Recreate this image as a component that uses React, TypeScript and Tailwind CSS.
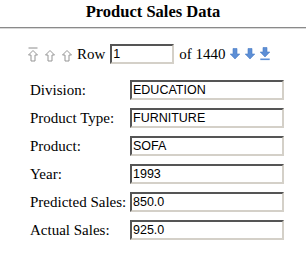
import React from "react";

const UpIcon = ({ bar }: { bar?: boolean }) => (
  <svg width="10" height="15" viewBox="0 0 10 15">
    {bar && <line x1="0.5" y1="1" x2="9.5" y2="1" stroke="#8c8c8c" strokeWidth="1" />}
    <path d="M5 3.5 L9.5 8 L7 8 L7 14 L3 14 L3 8 L0.5 8 Z" fill="#fff" stroke="#959595" strokeWidth="1" />
  </svg>
);

const DownIcon = ({ bar }: { bar?: boolean }) => (
  <svg width="10" height="14" viewBox="0 0 10 14">
    <path d={bar ? "M3 0.5 L7 0.5 L7 5 L9.8 5 L5 10 L0.2 5 L3 5 Z" : "M3 1.5 L7 1.5 L7 7 L9.8 7 L5 12 L0.2 7 L3 7 Z"} fill="#5d8fd6" stroke="#4a7cc4" strokeWidth="0.6" />
    {bar && <rect x="0.3" y="11.5" width="9.4" height="1.6" fill="#5d8fd6" />}
  </svg>
);

const Field = ({ label, value }: { label: string; value: string }) => (
  <div className="flex items-center h-[28px]">
    <div className="w-[100px] text-[15px] text-black">{label}</div>
    <div className="w-[154px] h-[20px] border-2 border-t-[#555] border-l-[#555] border-b-[#d4d0c8] border-r-[#d4d0c8] flex items-center pl-[1px] text-[12.5px] text-black" style={{ fontFamily: '"Liberation Sans", Arial, sans-serif' }}>
      {value}
    </div>
  </div>
);

export default function App() {
  return (
    <div className="w-[306px] h-[258px] bg-white" style={{ fontFamily: '"Liberation Serif", "Times New Roman", serif' }}>
      <div className="text-center font-bold text-[16.5px] text-black pt-[2px] h-[27px] leading-[20px]">Product Sales Data</div>
      <div className="h-[2px] border-t border-t-[#8a8a8a] border-b border-b-[#d8d8d8]"></div>
      <div className="pl-[28px] pt-[13px] flex items-center h-[33px] mt-[2px]">
        <div className="flex items-center gap-[7px]">
          <UpIcon bar />
          <UpIcon />
          <UpIcon />
        </div>
        <span className="text-[15px] ml-[5px] mr-[5px]">Row</span>
        <div className="w-[64px] h-[20px] border-2 border-t-[#555] border-l-[#555] border-b-[#d4d0c8] border-r-[#d4d0c8] flex items-center pl-[1px] text-[12.5px]" style={{ fontFamily: '"Liberation Sans", Arial, sans-serif' }}>1</div>
        <span className="text-[15px] ml-[5px] mr-[4px]">of 1440</span>
        <div className="flex items-center gap-[5px]">
          <DownIcon />
          <DownIcon />
          <DownIcon bar />
        </div>
      </div>
      <div className="pl-[30px] pt-[12px]">
        <Field label="Division:" value="EDUCATION" />
        <Field label="Product Type:" value="FURNITURE" />
        <Field label="Product:" value="SOFA" />
        <Field label="Year:" value="1993" />
        <Field label="Predicted Sales:" value="850.0" />
        <Field label="Actual Sales:" value="925.0" />
      </div>
    </div>
  );
}
